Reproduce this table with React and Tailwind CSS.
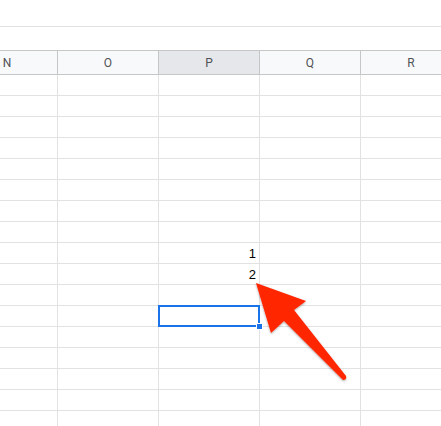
const COLS = ["N", "O", "P", "Q", "R"];
const ROWS = Array.from({ length: 17 }, (_, i) => i);

const values = { 9: "1", 10: "2" };

const Arrow = () => (
  <svg
    className="absolute left-0 top-0 pointer-events-none"
    width="441"
    height="426"
    viewBox="0 0 441 426"
  >
    <defs>
      <filter id="sh" x="-20%" y="-20%" width="140%" height="140%">
        <feDropShadow dx="0" dy="1" stdDeviation="1" floodColor="#000" floodOpacity="0.35" />
      </filter>
    </defs>
    <path
      d="M256 283 L306 301 L294 310 L346 376 Q347 380 343 380 L284 321 L271 333 Z"
      fill="#ff2600"
      filter="url(#sh)"
    />
  </svg>
);

export default function App() {
  return (
    <div className="relative w-[441px] h-[426px] overflow-hidden bg-white font-['Liberation_Sans',Arial,sans-serif]">
      <div className="h-[27px] border-b border-[#e1e1e1]"></div>
      <div className="h-[23px]"></div>

      {/* column header */}
      <div className="flex ml-[-43px] h-[25px] bg-[#f8f9fa] border-y border-[#c4c7c5]">
        {COLS.map((c) => (
          <div
            key={c}
            className={`w-[101px] shrink-0 border-r border-[#c4c7c5] flex items-center justify-center text-[12px] text-[#505357] font-['Roboto',sans-serif] ${
              c === "P" ? "bg-[#e6e7ea]" : ""
            }`}
          >
            {c}
          </div>
        ))}
      </div>

      {/* grid */}
      {ROWS.map((r) => (
        <div key={r} className="flex ml-[-43px] h-[21px] border-b border-[#e2e2e2]">
          {COLS.map((c) => (
            <div
              key={c}
              className="relative w-[101px] shrink-0 border-r border-[#e2e2e2] flex items-end justify-end pr-[3px] pb-[1px] text-[13px] leading-[16px] text-black"
            >
              {c === "P" && values[r + 1]}
              {c === "P" && r === 11 && (
                <div className="absolute top-[-1px] left-[-1px] w-[102px] h-[22px] border-2 border-[#1a73e8] z-10">
                  <div className="absolute right-[-5px] bottom-[-5px] w-[7px] h-[7px] bg-[#1a73e8] border border-white"></div>
                </div>
              )}
            </div>
          ))}
        </div>
      ))}

      <Arrow />
    </div>
  );
}
